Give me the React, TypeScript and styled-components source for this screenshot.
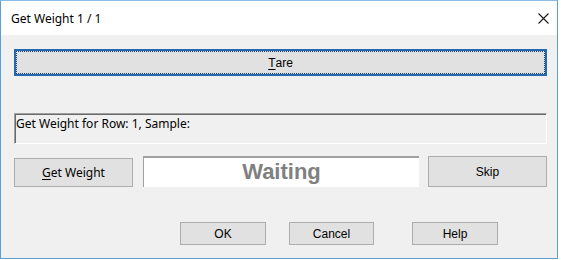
import React from "react";
import styled, { createGlobalStyle } from "styled-components";

const GlobalStyle = createGlobalStyle`
  html, body {
    margin: 0;
    padding: 0;
    background: #ffffff;
  }
  * {
    box-sizing: border-box;
  }
`;

const App = () => {
  return (
    <>
      <GlobalStyle />
      <Window>
        <TitleBar>
          <Title>Get Weight 1 / 1</Title>
          <CloseButton aria-label="Close">
            <svg width="11" height="11" viewBox="0 0 11 11">
              <path d="M0.5 0.5 L10.5 10.5 M10.5 0.5 L0.5 10.5" stroke="#1a1a1a" strokeWidth="1.1" fill="none" />
            </svg>
          </CloseButton>
        </TitleBar>
        <Body>
          <TareButton>
            <u>T</u>are
          </TareButton>
          <StatusBox>Get Weight for Row: 1, Sample:</StatusBox>
          <WeightRow>
            <RowButton $font="segoe">
              <u>G</u>et Weight
            </RowButton>
            <Reading>Waiting</Reading>
            <RowButton>Skip</RowButton>
          </WeightRow>
          <Footer>
            <DialogButton $offset={0} $width={86}>OK</DialogButton>
            <DialogButton $offset={23} $width={85}>Cancel</DialogButton>
            <DialogButton $offset={38} $width={86}>Help</DialogButton>
          </Footer>
        </Body>
      </Window>
    </>
  );
};

export default App;

const Window = styled.div`
  width: 558px;
  height: 259px;
  border: 1px solid #5b9fd4;
  border-top-color: #8cbde3;
  display: flex;
  flex-direction: column;
  background: #f0f0f0;
`;

const TitleBar = styled.div`
  height: 34px;
  flex-shrink: 0;
  background: #ffffff;
  display: flex;
  align-items: center;
  justify-content: space-between;
  padding: 0 8px 0 10px;
`;

const Title = styled.span`
  font-family: "Noto Sans", "Open Sans", sans-serif;
  font-size: 12px;
  color: #000000;
`;

const CloseButton = styled.div`
  width: 11px;
  height: 11px;
  display: flex;
  margin-top: 1px;
  svg {
    display: block;
  }
`;

const Body = styled.div`
  flex: 1;
  display: flex;
  flex-direction: column;
  padding: 14px 10px 0 13px;
`;

const TareButton = styled.div`
  position: relative;
  height: 27px;
  background: #e1e1e1;
  border: 2px solid #2369b0;
  display: flex;
  align-items: center;
  justify-content: center;
  font-family: "Liberation Sans", Arial, sans-serif;
  font-size: 12px;
  color: #000000;
  &::after {
    content: "";
    position: absolute;
    inset: 0;
    border: 1px dotted #1b3f66;
  }
  u {
    text-decoration: underline;
    text-underline-offset: 2px;
  }
`;

const StatusBox = styled.div`
  margin-top: 37px;
  height: 31px;
  border: 1px solid;
  border-color: #a0a0a0 #ffffff #ffffff #a0a0a0;
  box-shadow: inset 1px 1px 0 #696969;
  padding: 2px 0 0 1px;
  font-family: "Noto Sans", "Open Sans", sans-serif;
  font-size: 12px;
  line-height: 16px;
  color: #000000;
`;

const WeightRow = styled.div`
  margin-top: 12px;
  height: 31px;
  display: grid;
  grid-template-columns: 120px 1fr 119px;
  column-gap: 9px;
`;

const RowButton = styled.div<{ $font?: "segoe" }>`
  background: #e1e1e1;
  border: 1px solid #adadad;
  display: flex;
  align-items: center;
  justify-content: center;
  font-family: ${(p) =>
    p.$font === "segoe"
      ? `"Noto Sans", "Open Sans", sans-serif`
      : `"Liberation Sans", Arial, sans-serif`};
  font-size: 12px;
  color: #000000;
  &:first-child {
    margin-right: 1px;
    margin-top: 2px;
  }
  u {
    text-underline-offset: 2px;
  }
`;

const Reading = styled.div`
  background: #ffffff;
  border-top: 2px solid #a0a0a0;
  border-left: 1px solid #a0a0a0;
  display: flex;
  align-items: center;
  justify-content: center;
  font-family: "Liberation Sans", Arial, sans-serif;
  font-weight: bold;
  font-size: 22px;
  color: #808080;
  padding-bottom: 1px;
`;

const Footer = styled.div`
  margin-top: 35px;
  display: flex;
  padding-left: 166px;
`;

const DialogButton = styled.div<{ $offset: number; $width: number }>`
  width: ${(p) => p.$width}px;
  height: 23px;
  margin-left: ${(p) => p.$offset}px;
  background: #e1e1e1;
  border: 1px solid #adadad;
  display: flex;
  align-items: center;
  justify-content: center;
  font-family: "Liberation Sans", Arial, sans-serif;
  font-size: 12px;
  color: #000000;
`;
